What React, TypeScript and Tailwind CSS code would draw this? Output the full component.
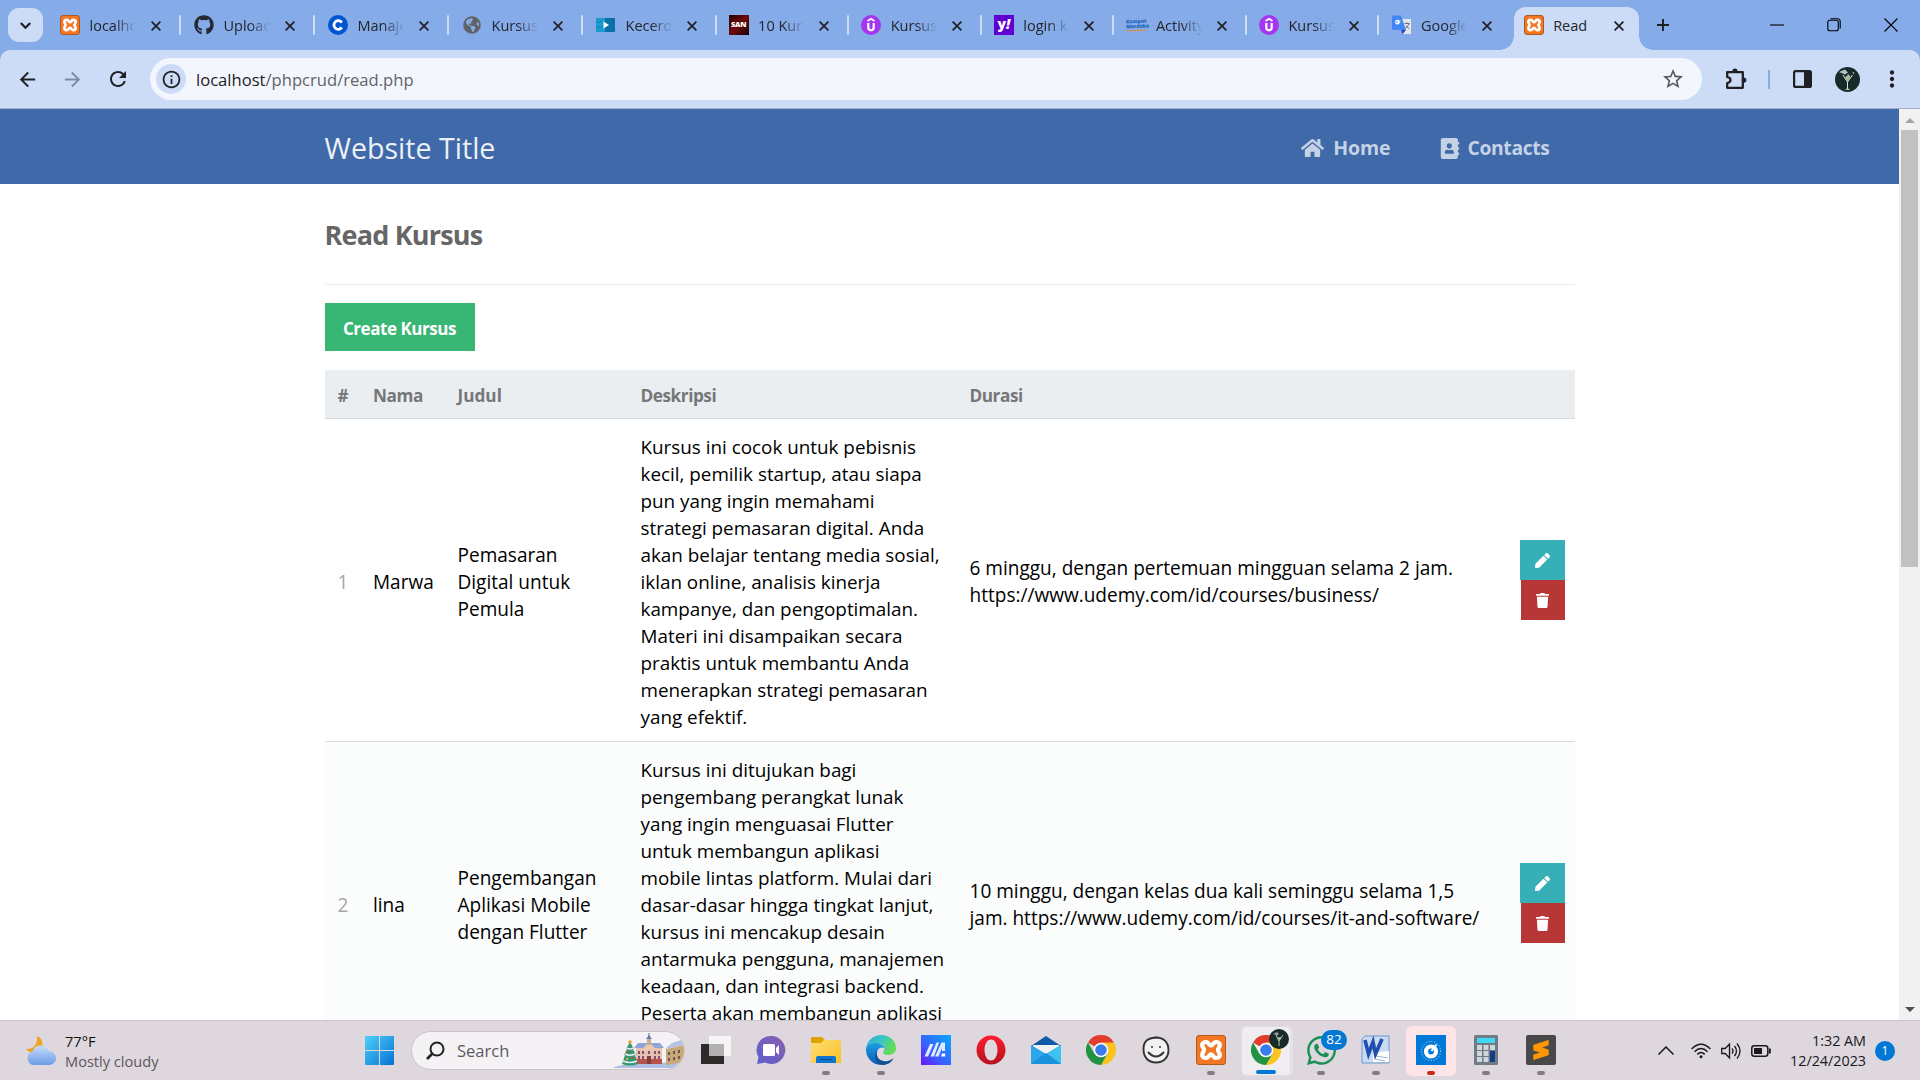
import React from "react";
import { FaHome, FaAddressBook, FaPen, FaTrash, FaGithub, FaWhatsapp, FaGlobeAmericas } from "react-icons/fa";
import { SiSublimetext } from "react-icons/si";
import { MdArrowBack, MdArrowForward, MdRefresh, MdStarBorder, MdMoreVert, MdInfoOutline } from "react-icons/md";

function Xampp({ box }: { box: string }) {
  return (
    <span className={`${box} flex items-center justify-center rounded-[3px] border border-[#b05a1c] bg-[#f37623] text-white`}>
      <svg viewBox="0 0 24 24" className="h-full w-full" fill="none" stroke="#fff" strokeWidth="3.6" strokeLinejoin="round" strokeLinecap="round">
        <path d="M8 5.2c-2.700-.4-4.300 1.800-3.200 4 .5 1 1.200 1.700 1.200 2.800s-.7 1.800-1.200 2.800c-1.100 2.200.5 4.400 3.200 4 2.200-.3 2.300-3 4-3s1.800 2.700 4 3c2.700.4 4.300-1.800 3.200-4-.5-1-1.200-1.700-1.200-2.800s.7-1.800 1.200-2.800c1.100-2.200-.5-4.400-3.200-4-2.200.3-2.300 3-4 3s-1.800-2.700-4-3z" />
      </svg>
    </span>
  );
}

function Udemy() {
  return (
    <svg viewBox="0 0 20 20" className="h-5 w-5">
      <circle cx="10" cy="10" r="10" fill="#a435f0" />
      <path d="M6.500 6 10 3.800 13.500 6" fill="none" stroke="#fff" strokeWidth="1.800" />
      <path d="M7.300 8v4.600a2.700 2.700 0 0 0 5.400 0V8" fill="none" stroke="#fff" strokeWidth="2.200" />
    </svg>
  );
}

function Translate() {
  return (
    <svg viewBox="0 0 20 20" className="h-5 w-5">
      <path d="M8 4h11v15H11z" fill="#e3e6ea" />
      <path d="M9 15h5l-3.500 4.300z" fill="#3544b5" />
      <path d="M1.500.5h7.500l5 14.500H1.500A1.500 1.500 0 0 1 0 13.500V2A1.500 1.500 0 0 1 1.500.5z" fill="#4285f4" />
      <path d="M8.500 6.200H6v1.400h1.200a1.800 1.800 0 1 1-.4-1.800" fill="none" stroke="#fff" strokeWidth="1.200" />
      <path d="M12.500 8.500h5M15 7.300v1.200M16.800 8.500c-.5 2.500-2 4-3.600 5M14 10.500c.8 1.500 2 2.500 3.500 3.200" fill="none" stroke="#667" strokeWidth=".9" />
    </svg>
  );
}

const tabs: { title: string; icon: React.ReactNode; wide?: boolean }[] = [
  { title: "localhost", icon: <Xampp box="h-5 w-5" />, wide: true },
  { title: "Upload files", icon: <FaGithub className="h-5 w-5 text-[#24292f]" />, wide: true },
  {
    title: "Manajemen",
    icon: (
      <svg viewBox="0 0 20 20" className="h-5 w-5">
        <circle cx="10" cy="10" r="10" fill="#0056d2" />
        <path d="M13.800 7.600A4.300 4.300 0 1 0 13.800 12.400" fill="none" stroke="#fff" strokeWidth="2.800" />
      </svg>
    ),
    wide: true,
  },
  { title: "Kursus", icon: <FaGlobeAmericas className="h-[18px] w-[18px] text-[#5f6368]" />, wide: true },
  {
    title: "Kecerdasan",
    icon: (
      <svg viewBox="0 0 20 20" className="h-5 w-5">
        <path d="M0 3h9v14H0z" fill="#1c9bd1" />
        <path d="M9 3h10v14H9z" fill="#0b6fa8" />
        <path d="M0 7h7M0 12h7" stroke="#1583b5" />
        <path d="M7.500 6.500v7l5.500-3.500z" fill="#fff" />
      </svg>
    ),
  },
  {
    title: "10 Kursus",
    icon: (
      <span className="flex h-5 w-5 items-center justify-center bg-gradient-to-br from-[#2c0304] via-[#6d0909] to-[#1d0203] text-[7.500px] font-extrabold tracking-[-0.3px] text-white">
        SAN
      </span>
    ),
  },
  { title: "Kursus", icon: <Udemy /> },
  {
    title: "login kampus",
    icon: <span className="flex h-5 w-5 items-center justify-center bg-[#5f01d1] pb-1 text-[14px] font-extrabold text-white">y<i>!</i></span>,
  },
  {
    title: "Activity",
    icon: (
      <span className="flex h-5 w-5 -rotate-3 flex-col justify-center text-[5px] leading-[5px] font-extrabold text-[#1c63b8]">
        <span>Kampus</span>
        <span>Merdeka</span>
        <span className="mt-px h-[1.500px] w-5 bg-[#e58b34]" />
      </span>
    ),
  },
  { title: "Kursus", icon: <Udemy /> },
  { title: "Google", icon: <Translate /> },
];

function CloseX() {
  return (
    <svg viewBox="0 0 10 10" className="h-[10px] w-[10px] shrink-0" stroke="#1f2023" strokeWidth="1.700">
      <path d="M.6.6l8.800 8.800M9.400.6.6 9.400" />
    </svg>
  );
}

function TabStrip() {
  return (
    <div className="flex h-[50px] bg-[#85abe9] text-[14.500px] text-[#24262b]">
      <div className="mt-2 ml-2 flex h-[34px] w-[35px] shrink-0 items-center justify-center rounded-[11px] bg-[#ccdcf6]">
        <svg viewBox="0 0 10 6" className="h-[7px] w-[11px]" fill="none" stroke="#1f2023" strokeWidth="2"><path d="M.7.7 5 5 9.300.7" /></svg>
      </div>
      <div className="ml-[17px] flex">
        {tabs.map((t, i) => (
          <div key={i} className={`flex h-[50px] items-center ${t.wide ? "w-[134px]" : "w-[132.6px]"}`}>
            <div className="flex w-5 shrink-0 justify-center">{t.icon}</div>
            <div className="ml-[9.500px] w-[46px] shrink-0 overflow-hidden pt-px whitespace-nowrap [mask-image:linear-gradient(90deg,#000_55%,transparent)]">{t.title}</div>
            <div className="ml-[15px] flex pt-px"><CloseX /></div>
            {i < tabs.length - 1 && <div className="ml-[18px] h-5 w-[2px] rounded bg-[#ccdcf6]" />}
          </div>
        ))}
      </div>
      <div className="relative mt-[7px] -ml-[10px] flex h-[43px] w-[125px] shrink-0 items-center rounded-t-[12px] bg-[#ccdcf6] pb-[7px] pl-[10px]">
        <span className="absolute bottom-0 -left-[14px] h-[14px] w-[14px] bg-[radial-gradient(circle_at_0_0,transparent_13.5px,#ccdcf6_14px)]" />
        <span className="absolute -right-[14px] bottom-0 h-[14px] w-[14px] bg-[radial-gradient(circle_at_100%_0,transparent_13.5px,#ccdcf6_14px)]" />
        <Xampp box="h-5 w-5" />
        <span className="ml-[9px] w-[46px] pt-px">Read</span>
        <span className="ml-[14.500px] flex pt-px"><CloseX /></span>
      </div>
      <div className="flex flex-1 items-center pl-[18px]">
        <svg viewBox="0 0 12 12" className="h-3 w-3" stroke="#1f2023" strokeWidth="1.900"><path d="M6 0v12M0 6h12" /></svg>
        <div className="ml-auto flex items-center gap-[43px] pr-[22px]">
          <svg viewBox="0 0 14 14" className="h-[14px] w-[14px]" stroke="#000" strokeWidth="1.100"><path d="M0 7h14" /></svg>
          <svg viewBox="0 0 14 14" className="h-[14px] w-[14px]" stroke="#000" strokeWidth="1.100" fill="none"><rect x=".8" y="2.300" width="10.500" height="10.500" rx="2" /><path d="M3.500.8h7.200a2.500 2.500 0 0 1 2.500 2.500v7.200" /></svg>
          <svg viewBox="0 0 14 14" className="h-[14px] w-[14px]" stroke="#000" strokeWidth="1.100"><path d="M.5.5l13 13M13.500.5l-13 13" /></svg>
        </div>
      </div>
    </div>
  );
}

function Toolbar() {
  return (
    <div className="bg-[#85abe9]">
      <div className="flex h-[59px] items-center rounded-t-[10px] border-b border-[#a3b0c8] bg-[#ccdcf6] text-[#1f2023]">
        <MdArrowBack className="ml-4 h-[23px] w-[23px]" />
        <MdArrowForward className="ml-[22px] h-[23px] w-[23px] text-[#7f8ba3]" />
        <MdRefresh className="ml-[22px] h-6 w-6" />
        <div className="ml-[20px] flex h-[42px] w-[1552px] items-center rounded-full bg-[#f3f7fd] pr-[17px] pl-[6px]">
          <div className="flex h-[30px] w-[30px] items-center justify-center rounded-full bg-[#ccdcf6]"><MdInfoOutline className="h-[21px] w-[21px]" /></div>
          <span className="ml-[10px] pt-[2px] text-[16.600px] text-[#5f6368]"><span className="text-[#1f2023]">localhost</span>/phpcrud/read.php</span>
          <MdStarBorder className="ml-auto h-6 w-6 text-[#54575c]" />
        </div>
        <svg viewBox="0 0 24 24" className="ml-[21px] h-[25px] w-[25px]" fill="none" stroke="#1f2023" strokeWidth="2.200" strokeLinejoin="round">
          <path d="M4 5h15v15H4v-4.500c2.200-.5 3.200-1.600 3.200-3S6.200 10 4 9.500z" />
          <path d="M9.500 4a2 2 0 0 1 4 0zM20 10.500a2 2 0 0 1 0 4z" fill="#1f2023" strokeWidth="1" />
        </svg>
        <div className="ml-[20px] h-[19px] w-[1.500px] bg-[#85abe9]" />
        <svg viewBox="0 0 19 18" className="ml-[23.500px] h-[18px] w-[19px]"><rect x="1.100" y="1.100" width="16.800" height="15.800" rx="1.500" fill="none" stroke="#1f2023" strokeWidth="2.200" /><path d="M11 1h7v16h-7z" fill="#1f2023" /></svg>
        <svg viewBox="0 0 25 25" className="ml-[23px] h-[25px] w-[25px]"><circle cx="12.500" cy="12.500" r="12.500" fill="#172b2a" /><path d="M8 8l4.500 7 5-7M12.500 15v7M10.500 22.300h4" stroke="#dfe6d8" strokeWidth="1" fill="none" /><path d="M4 5l6-2.500 3 3-3 2z" fill="#b9c2bb" /><path d="M9.500 11l3 4 3-5-2-3z" fill="#a9bb9d" /><circle cx="18.500" cy="6" r=".8" fill="#dfe6d8" /></svg>
        <MdMoreVert className="ml-[19px] h-[26px] w-[26px]" />
      </div>
    </div>
  );
}

const rows = [
  {
    id: 1,
    nama: "Marwa",
    judul: ["Pemasaran", "Digital untuk", "Pemula"],
    deskripsi: [
      "Kursus ini cocok untuk pebisnis",
      "kecil, pemilik startup, atau siapa",
      "pun yang ingin memahami",
      "strategi pemasaran digital. Anda",
      "akan belajar tentang media sosial,",
      "iklan online, analisis kinerja",
      "kampanye, dan pengoptimalan.",
      "Materi ini disampaikan secara",
      "praktis untuk membantu Anda",
      "menerapkan strategi pemasaran",
      "yang efektif.",
    ],
    durasi: ["6 minggu, dengan pertemuan mingguan selama 2 jam.", "https://www.udemy.com/id/courses/business/"],
  },
  {
    id: 2,
    nama: "lina",
    judul: ["Pengembangan", "Aplikasi Mobile", "dengan Flutter"],
    deskripsi: [
      "Kursus ini ditujukan bagi",
      "pengembang perangkat lunak",
      "yang ingin menguasai Flutter",
      "untuk membangun aplikasi",
      "mobile lintas platform. Mulai dari",
      "dasar-dasar hingga tingkat lanjut,",
      "kursus ini mencakup desain",
      "antarmuka pengguna, manajemen",
      "keadaan, dan integrasi backend.",
      "Peserta akan membangun aplikasi",
    ],
    durasi: ["10 minggu, dengan kelas dua kali seminggu selama 1,5", "jam. https://www.udemy.com/id/courses/it-and-software/"],
  },
];

function Lines({ items }: { items: string[] }) {
  return (
    <div className="whitespace-nowrap">
      {items.map((l) => (
        <div key={l}>{l}</div>
      ))}
    </div>
  );
}

function Page() {
  return (
    <div className="h-[911px] w-[1899px] overflow-hidden bg-white">
      <div className="h-[75px] bg-[#3f69a8]">
        <div className="mx-auto flex h-full w-[1250px] items-center">
          <h1 className="pt-1 text-[28.600px] text-[#ecf0f6]">Website Title</h1>
          <a className="ml-auto flex items-center pt-[3px] text-[19.500px] font-bold tracking-[-0.1px] text-[#c5d2e5]"><FaHome className="mr-[9px] h-[22px] w-[23px]" />Home</a>
          <a className="mr-[25px] ml-[49px] flex items-center pt-[3px] text-[19.300px] font-bold tracking-[-0.35px] text-[#c5d2e5]"><FaAddressBook className="mr-[8px] h-[21px] w-[20px]" />Contacts</a>
        </div>
      </div>
      <div className="mx-auto w-[1250px]">
        <h2 className="flex h-[101px] items-center border-b border-[#ebebeb] pt-[2px] text-[27px] font-bold tracking-[-0.8px] text-[#666]">Read Kursus</h2>
        <a className="mt-[18px] flex h-[48px] w-[150px] items-center justify-center bg-[#38b673] pt-[3px] text-[17px] font-bold tracking-[-0.45px] text-white">Create Kursus</a>
        <div className="mt-[19px] grid h-[49px] grid-cols-[35.5px_84.500px_183px_329px_1fr] items-center border-b border-[#d3dae0] bg-[#ebeef1] pt-[3px] text-[17.200px] font-bold tracking-[-0.45px] text-[#767779] *:pl-[13px]">
          <div>#</div><div>Nama</div><div className="tracking-[0px]">Judul</div><div>Deskripsi</div><div>Durasi</div>
        </div>
        {rows.map((r) => (
          <div key={r.id} className={`grid h-[323px] grid-cols-[35.5px_84.500px_183px_329px_1fr_68px] items-center border-b border-[#d3dae0] text-[19.050px] leading-[27px] text-black *:pl-[13px] ${r.id === 2 ? "bg-[#fbfcfc]" : ""}`}>
            <div className="pt-[5px] text-[#a5a7a9]">{r.id}</div>
            <div className="pt-[5px]">{r.nama}</div>
            <div className="pt-[5px]"><Lines items={r.judul} /></div>
            <div className="self-start pt-[15px] text-[18.850px]"><Lines items={r.deskripsi} /></div>
            <div className="pt-[3px]"><Lines items={r.durasi} /></div>
            <div className="flex flex-col text-white">
              <span className="flex h-10 w-[45px] items-center justify-center bg-[#37afb7]"><FaPen className="h-[15px] w-[15px]" /></span>
              <span className="ml-px flex h-10 w-[44px] items-center justify-center bg-[#b73737]"><FaTrash className="h-[15px] w-[15px]" /></span>
            </div>
          </div>
        ))}
      </div>
    </div>
  );
}

function Scrollbar() {
  return (
    <div className="flex h-[911px] w-[21px] flex-col items-center bg-[#f1f1f1]">
      <svg viewBox="0 0 10 5" className="mt-[9px] h-[5px] w-[10px]"><path d="M5 0l5 5H0z" fill="#a3a3a3" /></svg>
      <div className="mt-[7px] h-[437px] w-[17px] bg-[#c1c1c1]" />
      <svg viewBox="0 0 10 5" className="mt-auto mb-[8px] h-[5px] w-[10px]"><path d="M5 5l5-5H0z" fill="#505050" /></svg>
    </div>
  );
}

function ChromeLogo() {
  return (
    <svg viewBox="0 0 30 30" className="h-[30px] w-[30px]">
      <path d="M15 15 2 7.500A15 15 0 0 1 28 7.500z" fill="#e33b2e" />
      <path d="M15 15l0-7.500h13A15 15 0 0 1 15 30l6.500-11.200z" fill="#fcc31e" />
      <path d="M15 15l6.500 3.800L15 30A15 15 0 0 1 2 7.500l6.500 11.200z" fill="#229342" />
      <circle cx="15" cy="15" r="7.300" fill="#fff" />
      <circle cx="15" cy="15" r="5.800" fill="#3a7cec" />
    </svg>
  );
}

function Slot({ children, dot, box }: { children: React.ReactNode; dot?: string; box?: string }) {
  return (
    <div className={`relative flex h-[50px] w-[50px] items-center justify-center rounded-[6px] pb-px ${box ?? ""}`}>
      {children}
      {dot && <span className={`absolute bottom-[1px] h-1 rounded-full ${dot}`} />}
    </div>
  );
}

const grey = "w-2 bg-[#857c82]";

function Taskbar() {
  return (
    <div className="flex h-[60px] items-center border-t border-[#cdc6cd] bg-[#ded7de]">
      <svg viewBox="0 0 30 30" className="ml-[26px] h-[30px] w-[30px]">
        <defs><linearGradient id="cl" x2="0" y2="1"><stop stopColor="#c5dcfb" /><stop offset="1" stopColor="#6d9ce8" /></linearGradient></defs>
        <path d="M11 0c7 3 7 11 2 15-5 3-10 2-13-2 7 1 12-5 11-13z" fill="#f0a326" />
        <path d="M7 29a7 7 0 0 1-.5-13.500A8.500 8.500 0 0 1 22.500 15 7 7 0 0 1 23.500 29z" fill="url(#cl)" />
      </svg>
      <div className="ml-[9px] w-[300px] text-[14.600px] leading-5 text-[#5c585c]">
        <div className="text-[#111]">77°F</div>
        <div>Mostly cloudy</div>
      </div>
      <svg viewBox="0 0 29 29" className="h-[29px] w-[29px]">
        <defs><linearGradient id="win" x2="1" y2="1"><stop stopColor="#4fd0fb" /><stop offset="1" stopColor="#0672d2" /></linearGradient></defs>
        <path d="M1 0h13v14H0V1a1 1 0 0 1 1-1zM15 0h13a1 1 0 0 1 1 1v13H15zM0 15h14v14H1a1 1 0 0 1-1-1zM15 15h14v13a1 1 0 0 1-1 1H15z" fill="url(#win)" />
      </svg>
      <div className="ml-[17px] flex h-[39px] w-[274px] items-center overflow-hidden rounded-full border border-[#cac3ca] bg-[#f5f2f6] pl-[14px]">
        <svg viewBox="0 0 19 19" className="h-[19px] w-[19px]" fill="none" stroke="#222" strokeWidth="2"><circle cx="11" cy="8" r="6.500" /><path d="M6.500 12.500 1 18" strokeWidth="2.600" /></svg>
        <span className="ml-[12px] pt-px text-[16.500px] text-[#5c585c]">Search</span>
        <svg viewBox="0 0 70 36" className="ml-auto h-[36px] w-[70px]">
          <path d="M0 34q14-4 34-4t36-2v7H0z" fill="#aebfe6" />
          <path d="M22 15h26v16H22z" fill="#e8c0b0" />
          <path d="M22 26h26v5H22z" fill="#b5534a" />
          <path d="M20 15l4-5h22l4 5z" fill="#8fa5d6" />
          <path d="M30 14l5-5 5 5v3H30z" fill="#edc8b0" />
          <path d="M33 5h4v7h-4z" fill="#c9ad8f" />
          <path d="M32 6l3-4 3 4z" fill="#6480ba" />
          <path d="M35 0v4" stroke="#444f7d" strokeWidth=".8" />
          <path d="M24 18h2v3h-2zM28 18h2v3h-2zM34 18h2v3h-2zM40 18h2v3h-2zM44 18h2v3h-2zM24 23h2v3h-2zM28 23h2v3h-2zM40 23h2v3h-2zM44 23h2v3h-2z" fill="#7b536c" />
          <path d="M33 23h4v8h-4z" fill="#803d3d" />
          <path d="M52 16l18-4v17l-18 3z" fill="#c9a878" />
          <path d="M51 16l7-6 12-4v6z" fill="#b4c3e2" />
          <path d="M54 19h2v3h-2zM59 18h2v3h-2zM64 17h2v3h-2zM54 25h2v3h-2zM59 24h2v3h-2zM64 23h2v3h-2z" fill="#6e5554" />
          <path d="M16 9l4 7h-1l3 6h-1l3 9q-8 3-16 0l3-9h-1l3-6h-1z" fill="#37986f" />
          <path d="M12.500 15q3.500 2 7 0M11 21q5 2.500 10 0M9 28q7 3 14 0" stroke="#e4edf5" strokeWidth="1.500" fill="none" />
          <circle cx="16" cy="9" r="1.700" fill="#f29b2f" /><circle cx="14" cy="19" r="1.100" fill="#d83c3c" /><circle cx="18.500" cy="25" r="1.100" fill="#d83c3c" /><circle cx="13" cy="26" r="1.100" fill="#f2c52f" />
        </svg>
      </div>
      <div className="ml-[6px] flex items-center gap-[5px]">
        <Slot>
          <svg viewBox="0 0 30 30" className="h-[30px] w-[30px]"><path d="M0 9h23v20H0z" fill="#2c2b2a" /><path d="M8 1h22v20H8z" fill="#fafafa" opacity=".85" /><path d="M8 9h15v12H8z" fill="#b2b0b2" /></svg>
        </Slot>
        <Slot>
          <svg viewBox="0 0 30 30" className="h-[30px] w-[30px]"><defs><linearGradient id="ch" x1="1" x2="0" y2="1"><stop stopColor="#8a5fae" /><stop offset="1" stopColor="#5b5fd0" /></linearGradient></defs><path d="M15 1a14 14 0 1 1-6 26.500L1 29l1.500-7A14 14 0 0 1 15 1z" fill="url(#ch)" /><rect x="7" y="9" width="12" height="12" rx="1.500" fill="#fff" /><path d="M20 13l3-3v10l-3-3z" fill="#fff" /></svg>
        </Slot>
        <Slot dot={grey}>
          <svg viewBox="0 0 30 30" className="h-[30px] w-[30px]"><defs><linearGradient id="fo" x2="1" y2="1"><stop stopColor="#ffdf70" /><stop offset="1" stopColor="#fbbf27" /></linearGradient></defs><path d="M0 3a1 1 0 0 1 1-1h10l3 3v5H0z" fill="#e0a200" /><path d="M0 8l10 0 3-3h16a1 1 0 0 1 1 1v22H0z" fill="url(#fo)" /><path d="M5 28v-5a2 2 0 0 1 2-2h16a2 2 0 0 1 2 2v5z" fill="#0f75ce" /><path d="M9 24.500h12" stroke="#0a4f94" /></svg>
        </Slot>
        <Slot dot={grey}>
          <svg viewBox="0 0 30 30" className="h-[30px] w-[30px]">
            <defs><linearGradient id="e1" x2="1" y2=".4"><stop stopColor="#2aa6e0" /><stop offset=".5" stopColor="#35c6c8" /><stop offset="1" stopColor="#66db55" /></linearGradient><linearGradient id="e2" x2="0" y2="1"><stop stopColor="#1a9de0" /><stop offset="1" stopColor="#0c5fb5" /></linearGradient></defs>
            <path d="M0 14C1 5 8 0 15 0c9 0 15 6 15 13 0 5-4 7-8 7-3 0-5-1-5-2.500 0-1 1.500-1.500 1.500-4C18.500 9 13 8 10 8 5 8 1 11 0 14z" fill="url(#e1)" />
            <path d="M0 15C0 10 5 8 10 8c4 0 8 2 8.500 5.500C17 11.500 12 12 11 17c-1 6 4 12 9 12A15 15 0 0 1 0 15z" fill="url(#e2)" />
            <path d="M11.500 15c-2.500 6 1 10 6 11 4 .8 7-.5 10-3-2 5-7 7-11 7C9 29 7 20 11.500 15z" fill="#134f94" />
          </svg>
        </Slot>
        <Slot>
          <svg viewBox="0 0 30 30" className="h-[30px] w-[30px]"><defs><linearGradient id="my" x1="1" x2="0" y2="1"><stop stopColor="#08a8ff" /><stop offset=".6" stopColor="#395eff" /><stop offset="1" stopColor="#6a15f8" /></linearGradient></defs><path d="M0 0h30v30H0z" fill="url(#my)" /><path d="M9 9h3.500L7 21.500H3.500zM15.500 7.500H18L13 21.500H9.500zM20.500 7.500h3.500v8.500h-3v-3l-3.500 8.500H14z" fill="#dfe9ff" /><path d="M21 18.500h3.200v3H20z" fill="#fff" /></svg>
        </Slot>
        <Slot>
          <svg viewBox="0 0 30 30" className="h-[30px] w-[30px]"><defs><linearGradient id="op" x2="0" y2="1"><stop stopColor="#ff1b2d" /><stop offset="1" stopColor="#b5121f" /></linearGradient></defs><path fillRule="evenodd" d="M15 .5a14.500 14.500 0 1 1 0 29 14.500 14.500 0 0 1 0-29zm0 4c-4 0-6.500 5-6.500 10.500S11 25.500 15 25.500s6.500-5 6.500-10.500S19 4.500 15 4.500z" fill="url(#op)" /></svg>
        </Slot>
        <Slot>
          <svg viewBox="0 0 30 30" className="h-[30px] w-[30px]"><path d="M0 11 15 1l15 10v4H0z" fill="#0f5aa8" /><path d="M2 10h26v12H2z" fill="#f1f1f1" /><path d="M0 10l15 9L30 10v19H0z" fill="#28a8ea" /><path d="M15 19 30 10v19z" fill="#3cc3f2" /><path d="M0 29 14 18.500h2L30 29z" fill="#1b90dc" /></svg>
        </Slot>
        <Slot><ChromeLogo /></Slot>
        <Slot>
          <svg viewBox="0 0 28 28" className="h-[28px] w-[28px]" fill="none" stroke="#333" strokeWidth="1.900"><path d="M13 1.500C22 1 26.500 7 26.500 14S22 26.500 14 26.500 1.500 21 1.500 13 6 1.500 15.500 1.500" fill="#f2f2f2" /><path d="M6.500 16.500q7.500 8 15 0" strokeLinecap="round" /><circle cx="10" cy="11" r="1" fill="#333" stroke="none" /><circle cx="18" cy="11" r="1" fill="#333" stroke="none" /></svg>
        </Slot>
        <Slot dot={grey}><Xampp box="h-[30px] w-[30px]" /></Slot>
        <Slot dot="w-5 bg-[#0078d4]" box="border border-[#e3dee4] bg-[#f0edf1] shadow-[2px_0_0_#e6e1e7]">
          <ChromeLogo />
          <svg viewBox="0 0 20 20" className="absolute top-[2px] right-[1px] h-5 w-5"><circle cx="10" cy="10" r="10" fill="#172b2a" /><path d="M7 6l3 6 4-6M10 12v5" stroke="#b5c3ac" strokeWidth="1" fill="none" /><path d="M8 8.500l2 3.500 3-4z" fill="#a9bb9d" /><path d="M4 5l4-2 2 2-2 1.500z" fill="#8f9c93" /></svg>
        </Slot>
        <Slot dot={grey}>
          <FaWhatsapp className="h-[33px] w-[33px] text-[#1a8f56]" />
          <span className="absolute top-[4px] right-[2px] z-10 flex h-5 w-[26px] translate-x-[3px] items-center justify-center rounded-full bg-[#0078d4] text-[13.500px] text-white">82</span>
        </Slot>
        <Slot dot={grey}>
          <svg viewBox="0 0 30 30" className="h-[30px] w-[30px]"><path d="M4 1h24v27H1V4z" fill="#c9dbf2" stroke="#6f97cf" /><path d="M12 18l16-2v11H12z" fill="#fff" /><path d="M15 21l12 2M14 24l10 2" stroke="#9fb4d4" /><path d="M4 5l3.500 14L12 7l2.500 12L21 4" stroke="#1f4fae" strokeWidth="3.600" fill="none" /></svg>
        </Slot>
        <Slot dot="w-2 bg-[#c62b1e]" box="bg-[#fde4e6]">
          <svg viewBox="0 0 30 30" className="h-[30px] w-[30px]"><path d="M0 0h30v30H0z" fill="#0078d7" /><circle cx="15" cy="16" r="9.500" fill="none" stroke="#fff" strokeWidth="1" strokeDasharray="1 1.800" opacity=".8" /><circle cx="15" cy="16.500" r="5" fill="none" stroke="#fff" strokeWidth="4.200" /><path d="M15.500 16 20.500 9.500" stroke="#fff" strokeWidth="2" /></svg>
        </Slot>
        <Slot dot={grey}>
          <svg viewBox="0 0 24 30" className="h-[30px] w-[24px]"><rect width="24" height="30" rx="1.500" fill="#6f7b85" /><path d="M3 3h18v5H3z" fill="#42d7f7" /><path d="M3 10h5v5H3zM9.500 10h5v5h-5zM16 10h5v5h-5zM3 16h5v5H3zM9.500 16h5v5h-5zM3 22h5v5H3zM9.500 22h5v5h-5z" fill="#cfd6dc" /><path d="M16 16h5v11h-5z" fill="#123f85" /></svg>
        </Slot>
        <Slot dot={grey}><span className="flex h-[30px] w-[30px] items-center justify-center rounded-[2px] bg-[#484848]"><SiSublimetext className="h-5 w-5 text-[#ff9800]" /></span></Slot>
      </div>
      <div className="ml-auto flex items-center text-[#1a1a1a]">
        <svg viewBox="0 0 16 9" className="h-[9px] w-4" fill="none" stroke="#1a1a1a" strokeWidth="1.500"><path d="M.5 8.500 8 1l7.500 7.500" /></svg>
        <svg viewBox="0 0 20 16" className="ml-[17px] h-4 w-5" fill="none" stroke="#1a1a1a" strokeWidth="1.500"><path d="M.6 6q9.400-9.500 18.800 0M3.500 8.700q6.500-6.500 13 0M6.300 11.400q3.700-3.700 7.400 0" /><circle cx="10" cy="13.800" r="1.500" fill="#1a1a1a" stroke="none" /></svg>
        <svg viewBox="0 0 20 18" className="ml-[10px] h-[18px] w-5" fill="none" stroke="#1a1a1a" strokeWidth="1.300"><path d="M.7 6.500h3.500L8.500 2v14l-4.300-4.500H.7zM11 6.500q2 2.500 0 5M13.500 4q4 5 0 10M16 1.500q6 7.500 0 15" /></svg>
        <svg viewBox="0 0 20 12" className="ml-[10px] h-3 w-5" fill="none" stroke="#1a1a1a" strokeWidth="1.500"><rect x=".8" y=".8" width="16" height="10.400" rx="2.500" /><path d="M3 3h8v6H3z" fill="#1a1a1a" stroke="none" /><path d="M18.800 3.500v5" strokeWidth="2" /></svg>
        <div className="ml-[10px] w-[85px] text-right text-[14.400px] leading-[20px] tracking-[-0.05px]"><div>1:32 AM</div><div>12/24/2023</div></div>
        <div className="mr-[25px] ml-[9px] flex h-5 w-5 items-center justify-center rounded-full bg-[#0078d4] text-[12px] text-white">1</div>
      </div>
    </div>
  );
}

export default function App() {
  return (
    <div className="h-[1080px] w-[1920px] overflow-hidden bg-white font-['Open_Sans','Noto_Sans',sans-serif]">
      <TabStrip />
      <Toolbar />
      <div className="flex"><Page /><Scrollbar /></div>
      <Taskbar />
    </div>
  );
}
